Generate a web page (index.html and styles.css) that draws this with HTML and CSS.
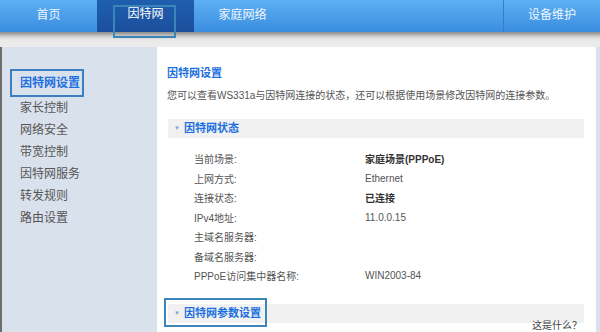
FILE: index.html
```html
<!DOCTYPE html>
<html lang="zh-CN">
<head>
    <meta charset="UTF-8">
    <title>因特网设置</title>
    <link rel="stylesheet" href="styles.css">
</head>
<body>
    <div class="topnav">
        <div class="tab">首页</div>
        <div class="tab active">因特网<span class="mark tab-mark"></span></div>
        <div class="tab">家庭网络</div>
        <div class="spacer"></div>
        <div class="tab last">设备维护</div>
    </div>
    <div class="nav-shadow"></div>
    <div class="main">
        <ul class="sidebar">
            <li class="current">因特网设置</li>
            <li>家长控制</li>
            <li>网络安全</li>
            <li>带宽控制</li>
            <li>因特网服务</li>
            <li>转发规则</li>
            <li>路由设置</li>
        </ul>
        <div class="content">
            <h1 class="title">因特网设置</h1>
            <p class="desc">您可以查看WS331a与因特网连接的状态，还可以根据使用场景修改因特网的连接参数。</p>

            <div class="band"><span class="arrow">▼</span>因特网状态</div>
            <table class="status">
                <tr><td class="label">当前场景:</td><td class="strong">家庭场景(PPPoE)</td></tr>
                <tr><td class="label">上网方式:</td><td>Ethernet</td></tr>
                <tr><td class="label">连接状态:</td><td class="strong">已连接</td></tr>
                <tr><td class="label">IPv4地址:</td><td>11.0.0.15</td></tr>
                <tr><td class="label">主域名服务器:</td><td></td></tr>
                <tr><td class="label">备域名服务器:</td><td></td></tr>
                <tr><td class="label">PPPoE访问集中器名称:</td><td>WIN2003-84</td></tr>
            </table>

            <div class="band second"><span class="arrow">▼</span>因特网参数设置<span class="mark band-mark"></span></div>
            <div class="help">这是什么？</div>
        </div>
    </div>
</body>
</html>
```

FILE: styles.css
```css
body {
    margin: 0;
    width: 600px;
    height: 332px;
    overflow: hidden;
    background-color: #d9e1ec;
    font-family: "Liberation Sans", "Noto Sans CJK SC", sans-serif;
    color: #444;
}
.topnav {
    display: flex;
    height: 32px;
    background: linear-gradient(#5cb0f2, #3b8de0);
}
.topnav .tab {
    position: relative;
    width: 97px;
    line-height: 30px;
    text-align: center;
    font-size: 12px;
    color: #eef5ff;
}
.topnav .tab.active {
    background: linear-gradient(#1f5fb0, #1c4f9c);
    color: #fff;
    line-height: 28px;
}
.topnav .tab.last {
    width: 96px;
    border-left: 1px solid #2f7fd0;
}
.topnav .spacer {
    flex: 1;
}
.mark {
    position: absolute;
    border: 2px solid #3b86b8;
    pointer-events: none;
}
.tab-mark {
    left: 16px;
    top: 5px;
    width: 59px;
    height: 29px;
}
.nav-shadow {
    height: 15px;
    background: linear-gradient(#8c8c8c, #d6d6d6 5px, #e9e9e9 8px, #ececec);
}
.main {
    display: flex;
    height: 285px;
    border-left: 2px solid #6e6e6e;
}
.sidebar {
    list-style: none;
    margin: 0;
    padding: 22px 0 0 8px;
    width: 147px;
}
.sidebar li {
    height: 22px;
    line-height: 22px;
    padding-left: 10px;
    font-size: 12px;
    color: #555;
}
.sidebar li.current {
    width: 62px;
    height: 24px;
    line-height: 24px;
    margin-bottom: 0;
    border: 2px solid #3b7fc0;
    padding-left: 8px;
    color: #1c6fe0;
    font-weight: bold;
}
.content {
    position: relative;
    flex: 1;
    margin-right: 4px;
    background: #fff;
    padding: 0 12px 0 10px;
}
.title {
    margin: 19px 0 0;
    font-size: 11px;
    line-height: 14px;
    color: #1c6fe0;
}
.desc {
    margin: 9px 0 0;
    font-size: 10px;
    line-height: 14px;
    color: #555;
}
.band {
    position: relative;
    margin: 16px 0 0 1px;
    height: 19px;
    line-height: 19px;
    background: #f1f1f1;
    font-size: 11px;
    font-weight: bold;
    color: #1c6fe0;
    padding-left: 6px;
}
.arrow {
    font-size: 6px;
    color: #7da4d0;
    vertical-align: 2px;
    margin-right: 4px;
}
.status {
    border-collapse: collapse;
    margin: 11px 0 0 27px;
    font-size: 10px;
    color: #555;
}
.status td {
    height: 19.5px;
    padding: 0;
}
.status .label {
    width: 171px;
}
.status .strong {
    color: #333;
    font-weight: bold;
}
.band.second {
    margin-top: 18px;
}
.band-mark {
    left: -4px;
    top: -6px;
    width: 99px;
    height: 25px;
}
.help {
    position: absolute;
    right: 14px;
    bottom: 0;
    font-size: 10px;
    color: #444;
}
```
